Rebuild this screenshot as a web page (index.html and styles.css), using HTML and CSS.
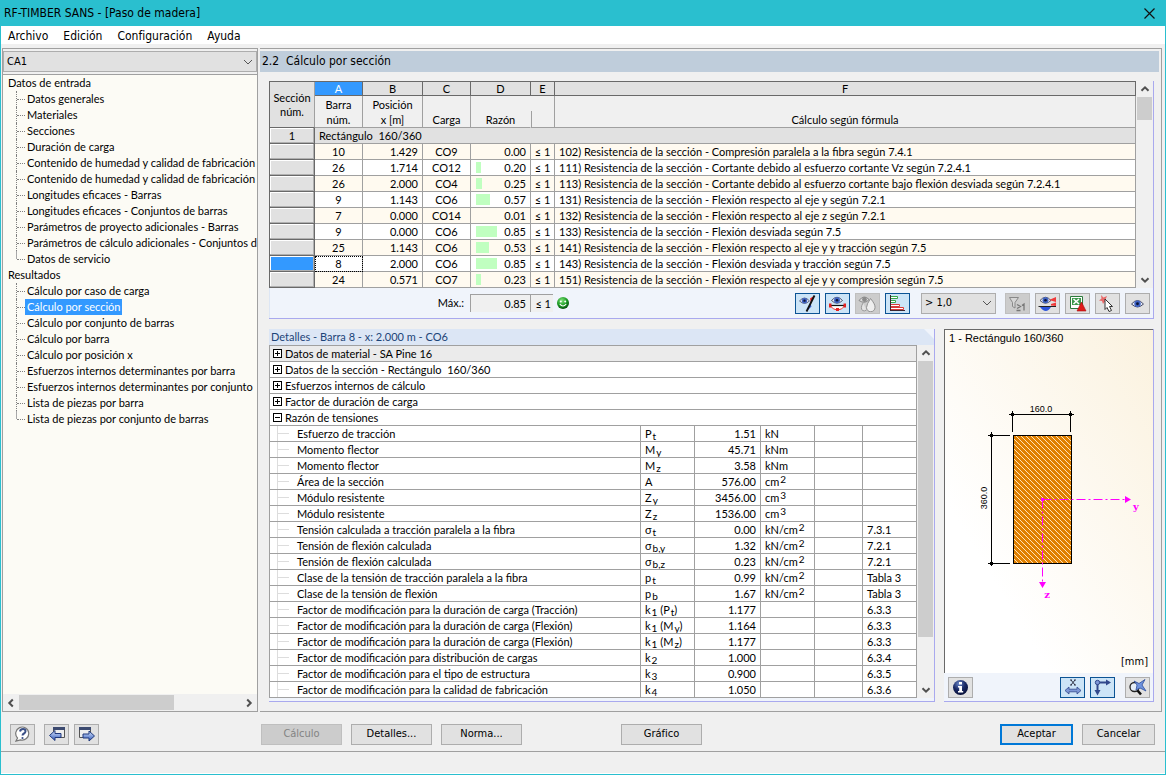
FILE: index.html
```html
<!DOCTYPE html>
<html lang="es">
<head>
<meta charset="utf-8">
<title>RF-TIMBER SANS - [Paso de madera]</title>
<link rel="stylesheet" href="styles.css">
</head>
<body>
<svg class="defs" aria-hidden="true">
  <defs>
    <linearGradient id="arrowBlue" x1="0" y1="0" x2="0" y2="1"><stop offset="0" stop-color="#dbe8ff"/><stop offset="1" stop-color="#2f57b8"/></linearGradient>
    <radialGradient id="greenBall" cx="0.4" cy="0.3" r="0.7"><stop offset="0" stop-color="#7fe37a"/><stop offset="0.6" stop-color="#1d9a24"/><stop offset="1" stop-color="#05520c"/></radialGradient>
    <radialGradient id="navyBall" cx="0.4" cy="0.25" r="0.8"><stop offset="0" stop-color="#6a86c8"/><stop offset="0.5" stop-color="#1a2a66"/><stop offset="1" stop-color="#060d33"/></radialGradient>
    <symbol id="up" viewBox="0 0 16 16"><path d="M4.500 9.800L8 6.300l3.500 3.500" fill="none" stroke="#505050" stroke-width="2"/></symbol>
    <symbol id="down" viewBox="0 0 16 16"><path d="M4.500 6.200L8 9.700l3.500-3.500" fill="none" stroke="#505050" stroke-width="2"/></symbol>
    <symbol id="left" viewBox="0 0 16 16"><path d="M9.800 4.500L6.300 8l3.500 3.500" fill="none" stroke="#505050" stroke-width="2"/></symbol>
    <symbol id="right" viewBox="0 0 16 16"><path d="M6.200 4.500L9.700 8l-3.500 3.500" fill="none" stroke="#505050" stroke-width="2"/></symbol>
    <symbol id="chev" viewBox="0 0 16 16"><path d="M4 6l4 4 4-4" fill="none" stroke="#555" stroke-width="1"/></symbol>
    <symbol id="eye" viewBox="0 0 12 10"><path d="M0.500 5.500Q6-1 11.500 5.500Q6 11 .5 5.500z" fill="#e9edf8" stroke="#2b3252" stroke-width=".8"/><circle cx="6" cy="5.200" r="3" fill="#3f63c4"/><circle cx="6" cy="5.200" r="1.300" fill="#0b1436"/></symbol>
  </defs>
</svg>
<div class="window">
  <header class="titlebar">
    <h1>RF-TIMBER SANS - [Paso de madera]</h1>
    <button class="close" aria-label="Cerrar"><svg width="11" height="11" viewBox="0 0 11 11"><path d="M.5.5l10 10M10.500.5l-10 10" stroke="#111" stroke-width="1.200"/></svg></button>
  </header>
  <nav class="menu">
    <button>Archivo</button><button>Edición</button><button>Configuración</button><button>Ayuda</button>
  </nav>

  <div class="work">
    <aside class="side">
      <div class="combo case">
        <select aria-label="Caso"><option>CA1</option></select>
        <svg width="16" height="16"><use href="#chev"/></svg>
      </div>
      <div class="tree">
        <p>Datos de entrada</p>
        <ul>
          <li><a href="#">Datos generales</a></li>
          <li><a href="#">Materiales</a></li>
          <li><a href="#">Secciones</a></li>
          <li><a href="#">Duración de carga</a></li>
          <li><a href="#">Contenido de humedad y calidad de fabricación</a></li>
          <li><a href="#">Contenido de humedad y calidad de fabricación</a></li>
          <li><a href="#">Longitudes eficaces - Barras</a></li>
          <li><a href="#">Longitudes eficaces - Conjuntos de barras</a></li>
          <li><a href="#">Parámetros de proyecto adicionales - Barras</a></li>
          <li><a href="#">Parámetros de cálculo adicionales - Conjuntos d</a></li>
          <li><a href="#">Datos de servicio</a></li>
        </ul>
        <p>Resultados</p>
        <ul>
          <li><a href="#">Cálculo por caso de carga</a></li>
          <li><a href="#" class="current">Cálculo por sección</a></li>
          <li><a href="#">Cálculo por conjunto de barras</a></li>
          <li><a href="#">Cálculo por barra</a></li>
          <li><a href="#">Cálculo por posición x</a></li>
          <li><a href="#">Esfuerzos internos determinantes por barra</a></li>
          <li><a href="#">Esfuerzos internos determinantes por conjunto</a></li>
          <li><a href="#">Lista de piezas por barra</a></li>
          <li><a href="#">Lista de piezas por conjunto de barras</a></li>
        </ul>
      </div>
      <div class="hscroll">
        <button aria-label="Izquierda"><svg width="16" height="16"><use href="#left"/></svg></button>
        <div class="track"><div class="thumb"></div></div>
        <button aria-label="Derecha"><svg width="16" height="16"><use href="#right"/></svg></button>
      </div>
    </aside>

    <main class="main">
      <h2>2.2&nbsp; Cálculo por sección</h2>

      <section class="results">
        <div class="gridrow">
          <table class="grid">
            <colgroup><col class="c0"><col class="c1"><col class="c2"><col class="c3"><col class="c4"><col class="c5"><col></colgroup>
            <thead>
              <tr class="letters"><th rowspan="2" class="corner">Sección<br>núm.</th><th class="on">A</th><th>B</th><th>C</th><th>D</th><th>E</th><th>F</th></tr>
              <tr class="names"><th>Barra<br>núm.</th><th>Posición<br>x [m]</th><th>Carga</th><th class="open">Razón</th><th class="half"></th><th>Cálculo según fórmula</th></tr>
            </thead>
            <tbody>
              <tr class="group"><th>1</th><td colspan="6">Rectángulo&nbsp; 160/360</td></tr>
              <tr><th></th><td>10</td><td>1.429</td><td>CO9</td><td>0.00</td><td>≤ 1</td><td>102) Resistencia de la sección - Compresión paralela a la fibra según 7.4.1</td></tr>
              <tr><th></th><td>26</td><td>1.714</td><td>CO12</td><td><i class="bar" style="width:5px"></i>0.20</td><td>≤ 1</td><td>111) Resistencia de la sección - Cortante debido al esfuerzo cortante Vz según 7.2.4.1</td></tr>
              <tr><th></th><td>26</td><td>2.000</td><td>CO4</td><td><i class="bar" style="width:6px"></i>0.25</td><td>≤ 1</td><td>113) Resistencia de la sección - Cortante debido al esfuerzo cortante bajo flexión desviada según 7.2.4.1</td></tr>
              <tr><th></th><td>9</td><td>1.143</td><td>CO6</td><td><i class="bar" style="width:14px"></i>0.57</td><td>≤ 1</td><td>131) Resistencia de la sección - Flexión respecto al eje y según 7.2.1</td></tr>
              <tr><th></th><td>7</td><td>0.000</td><td>CO14</td><td>0.01</td><td>≤ 1</td><td>132) Resistencia de la sección - Flexión respecto al eje z según 7.2.1</td></tr>
              <tr><th></th><td>9</td><td>0.000</td><td>CO6</td><td><i class="bar" style="width:21px"></i>0.85</td><td>≤ 1</td><td>133) Resistencia de la sección - Flexión desviada según 7.5</td></tr>
              <tr><th></th><td>25</td><td>1.143</td><td>CO6</td><td><i class="bar" style="width:13px"></i>0.53</td><td>≤ 1</td><td>141) Resistencia de la sección - Flexión respecto al eje y y tracción según 7.5</td></tr>
              <tr><th class="on"></th><td class="focus">8</td><td>2.000</td><td>CO6</td><td><i class="bar" style="width:21px"></i>0.85</td><td>≤ 1</td><td>143) Resistencia de la sección - Flexión desviada y tracción según 7.5</td></tr>
              <tr><th></th><td>24</td><td>0.571</td><td>CO7</td><td><i class="bar" style="width:5px"></i>0.23</td><td>≤ 1</td><td>151) Resistencia de la sección - Flexión respecto al eje y y compresión según 7.5</td></tr>
            </tbody>
          </table>
          <div class="vscroll">
            <button aria-label="Arriba"><svg width="16" height="16"><use href="#up"/></svg></button>
            <div class="track"><div class="thumb small"></div></div>
            <button aria-label="Abajo"><svg width="16" height="16"><use href="#down"/></svg></button>
          </div>
        </div>
        <div class="summary">
          <span class="maxlabel">Máx.:</span><output class="maxval">0.85</output><span class="maxlim">≤ 1</span>
          <svg class="smile" width="12" height="12" viewBox="0 0 12 12"><circle cx="6" cy="6" r="6" fill="url(#greenBall)"/><circle cx="3.800" cy="4.500" r="1" fill="#fff"/><circle cx="8.200" cy="4.500" r="1" fill="#fff"/><path d="M2.800 7q3.200 4 6.400 0" fill="none" stroke="#fff" stroke-width="1.200"/></svg>
          <div class="tools">
            <button class="ico pressed" aria-label="Ver color"><svg viewBox="0 0 21 17"><use href="#eye" x="2" y="1" width="11" height="9"/><path d="M13 3.500L17.500.5l-3.500 8z" fill="#f02020"/><path d="M13 8l-3.500 8.500 5-5z" fill="#3a62d8"/><path d="M17.500 0.500L9.500 16.500" stroke="#111" stroke-width="1.800"/></svg></button>
            <button class="ico pressed" aria-label="Ver diagrama"><svg viewBox="0 0 21 17"><path d="M3 10.500q3 4.500 7.500 4.500t7.500-4.500" fill="#fff" stroke="#e33" stroke-width="1"/><path d="M3 10.500h15" stroke="#111" stroke-width="1.200"/><path d="M2 8.500h2.500v4H2zM16.500 8.500H19v4h-2.500zM9 13h3v3H9z" fill="#e52222"/><use href="#eye" x="4" y="0" width="12" height="10"/></svg></button>
            <button class="ico off" disabled aria-label="Ver material"><svg viewBox="0 0 21 17"><path d="M2 5.500Q7-1 12 4.500Q8 9.500 2 5.500z" fill="#ddd" stroke="#888"/><circle cx="7.500" cy="4.500" r="2.400" fill="#8b8b8b"/><path d="M6 8q-3 5-.5 7.500 2 1 4-.5" fill="#e3e3e3" stroke="#999"/><path d="M13.500 3.500q5 6 4.500 9a4 4 0 0 1-8.500 0q0-3 4-9z" fill="#eee" stroke="#909090"/></svg></button>
            <button class="ico pressed" aria-label="Barras de color"><svg viewBox="0 0 21 17"><path d="M3.500 1.500h7v2h-7M3.500 5.500h5v2h-5" fill="#fff" stroke="#38a848"/><path d="M3.500 9.500h9v2h-9M3.500 12.500h13v2h-13" fill="#fff" stroke="#d83a3a"/><path d="M3.500 0v16M3 15.500h15" stroke="#3a2530"/></svg></button>
            <div class="combo limit">
              <select aria-label="Filtro de razón"><option>&gt; 1,0</option></select>
              <svg width="16" height="16"><use href="#chev"/></svg>
            </div>
            <button class="ico off" disabled aria-label="Filtrar mayores que 1"><svg viewBox="0 0 21 17"><path d="M2.500 2.500h9L8 7.500V13l-2.500-1.500V7.500z" fill="#d6d6d6" stroke="#888"/><path d="M10 9.500l3.500 2-3.500 2M9.500 15.500h4M15 10.500l2-1.500v6.500" fill="none" stroke="#777" stroke-width="1.300"/></svg></button>
            <button class="ico" aria-label="Resultados"><svg viewBox="0 0 21 17"><use href="#eye" x="2" y="0" width="13" height="10"/><path d="M12 5l7-3v5zM14 9l5-1.500V11l-5-.5z" fill="#f03a3a"/><path d="M2 11h15l-1.500 1h-12z" fill="#e33"/><path d="M3 12q6 8 11 0z" fill="#2c55dc"/><path d="M1.500 11.500H19" stroke="#222"/></svg></button>
            <button class="ico" aria-label="Exportar a Excel"><svg viewBox="0 0 21 17"><path d="M3.500 1.500h12v12h-12z" fill="#fff" stroke="#2d7a3d"/><path d="M5 3h9v7H5z" fill="#3d9a4c"/><path d="M6.500 4l5.500 5M12 4L6.500 9" stroke="#fff" stroke-width="1.600"/><path d="M14.500 7l4.500 9h-9z" fill="#e01b1b" stroke="#a80f0f" stroke-width=".6"/></svg></button>
            <button class="ico" aria-label="Seleccionar barra"><svg viewBox="0 0 21 17"><path d="M4 0l2.500 2.500L10 1 8.500 4.500 11 7H7.500L6 9 5 6 2 5.500l2.500-2z" fill="#e86a6a"/><path d="M8 4l7.500 7.500h-3l2 4-2.500 1-2-4L8 14.500z" fill="#fff" stroke="#333"/></svg></button>
            <button class="ico" aria-label="Modo de vista"><svg viewBox="0 0 21 17"><use href="#eye" x="4" y="3" width="13" height="11"/></svg></button>
          </div>
        </div>
      </section>

      <div class="lower">
        <section class="details">
          <h3>Detalles - Barra 8 - x: 2.000 m - CO6</h3>
          <div class="detailrow">
            <table class="props">
              <colgroup><col><col class="d1"><col class="d2"><col class="d3"><col class="d4"><col class="d5"></colgroup>
              <tbody>
                <tr class="head shade"><td colspan="6"><button class="box plus" aria-label="Expandir"></button>Datos de material - SA Pine 16</td></tr>
                <tr class="head"><td colspan="6"><button class="box plus" aria-label="Expandir"></button>Datos de la sección - Rectángulo&nbsp; 160/360</td></tr>
                <tr class="head"><td colspan="6"><button class="box plus" aria-label="Expandir"></button>Esfuerzos internos de cálculo</td></tr>
                <tr class="head"><td colspan="6"><button class="box plus" aria-label="Expandir"></button>Factor de duración de carga</td></tr>
                <tr class="head"><td colspan="6"><button class="box" aria-label="Contraer"></button>Razón de tensiones</td></tr>
                <tr><td>Esfuerzo de tracción</td><td>P<sub>t</sub></td><td>1.51</td><td>kN</td><td></td><td></td></tr>
                <tr><td>Momento flector</td><td>M<sub>y</sub></td><td>45.71</td><td>kNm</td><td></td><td></td></tr>
                <tr><td>Momento flector</td><td>M<sub>z</sub></td><td>3.58</td><td>kNm</td><td></td><td></td></tr>
                <tr><td>Área de la sección</td><td>A</td><td>576.00</td><td>cm<sup>2</sup></td><td></td><td></td></tr>
                <tr><td>Módulo resistente</td><td>Z<sub>y</sub></td><td>3456.00</td><td>cm<sup>3</sup></td><td></td><td></td></tr>
                <tr><td>Módulo resistente</td><td>Z<sub>z</sub></td><td>1536.00</td><td>cm<sup>3</sup></td><td></td><td></td></tr>
                <tr><td>Tensión calculada a tracción paralela a la fibra</td><td>σ<sub>t</sub></td><td>0.00</td><td>kN/cm<sup>2</sup></td><td></td><td>7.3.1</td></tr>
                <tr><td>Tensión de flexión calculada</td><td>σ<sub>b,y</sub></td><td>1.32</td><td>kN/cm<sup>2</sup></td><td></td><td>7.2.1</td></tr>
                <tr><td>Tensión de flexión calculada</td><td>σ<sub>b,z</sub></td><td>0.23</td><td>kN/cm<sup>2</sup></td><td></td><td>7.2.1</td></tr>
                <tr><td>Clase de la tensión de tracción paralela a la fibra</td><td>p<sub>t</sub></td><td>0.99</td><td>kN/cm<sup>2</sup></td><td></td><td>Tabla 3</td></tr>
                <tr><td>Clase de la tensión de flexión</td><td>p<sub>b</sub></td><td>1.67</td><td>kN/cm<sup>2</sup></td><td></td><td>Tabla 3</td></tr>
                <tr><td>Factor de modificación para la duración de carga (Tracción)</td><td>k<sub>1</sub> (P<sub>t</sub>)</td><td>1.177</td><td></td><td></td><td>6.3.3</td></tr>
                <tr><td>Factor de modificación para la duración de carga (Flexión)</td><td>k<sub>1</sub> (M<sub>y</sub>)</td><td>1.164</td><td></td><td></td><td>6.3.3</td></tr>
                <tr><td>Factor de modificación para la duración de carga (Flexión)</td><td>k<sub>1</sub> (M<sub>z</sub>)</td><td>1.177</td><td></td><td></td><td>6.3.3</td></tr>
                <tr><td>Factor de modificación para distribución de cargas</td><td>k<sub>2</sub></td><td>1.000</td><td></td><td></td><td>6.3.4</td></tr>
                <tr><td>Factor de modificación para el tipo de estructura</td><td>k<sub>3</sub></td><td>0.900</td><td></td><td></td><td>6.3.5</td></tr>
                <tr><td>Factor de modificación para la calidad de fabricación</td><td>k<sub>4</sub></td><td>1.050</td><td></td><td></td><td>6.3.6</td></tr>
              </tbody>
            </table>
            <div class="vscroll">
              <button aria-label="Arriba"><svg width="16" height="16"><use href="#up"/></svg></button>
              <div class="track"><div class="thumb large"></div></div>
              <button aria-label="Abajo"><svg width="16" height="16"><use href="#down"/></svg></button>
            </div>
          </div>
        </section>

        <section class="preview">
          <div class="stage">
            <span class="caption">1 - Rectángulo 160/360</span>
            <svg class="drawing" width="208" height="340">
              <defs>
                <pattern id="hatch" width="5" height="5" patternUnits="userSpaceOnUse"><rect width="5" height="5" fill="#e08000"/><path d="M-1-1l7 7M-1 4l2 2M4-1l2 2" stroke="#ffe2b8" stroke-width="1"/></pattern>
              </defs>
              <rect x="68.500" y="105.500" width="58" height="128" fill="url(#hatch)" stroke="#000"/>
              <g stroke="#000" fill="#000">
                <path d="M64 84.500h65M67.500 81v21M125.500 81v21M46.500 102v134M43 105.500h22M43 233.500h22" fill="none"/>
                <path d="M67.500 82.500l2 2-2 2-2-2zM125.500 82.500l2 2-2 2-2-2zM46.500 103.500l2 2-2 2-2-2zM46.500 231.500l2 2-2 2-2-2z"/>
              </g>
              <path d="M97.500 169.500H181" stroke="#f0f" stroke-dasharray="9 3 2 3" fill="none"/>
              <path d="M97.500 169.500V254" stroke="#f0f" stroke-dasharray="9 3 2 3" fill="none"/>
              <path d="M96 168h3v3h-3zM180 166l6 3.500-6 3.500zM94 252h7l-3.500 6z" fill="#f0f"/>
              <text x="96" y="82" class="dim">160.0</text>
              <text transform="translate(42 168) rotate(-90)" class="dim">360.0</text>
              <text x="191" y="180" class="axis">y</text>
              <text x="102" y="268" class="axis">z</text>
            </svg>
            <span class="unit">[mm]</span>
          </div>
          <div class="ptools">
            <button class="ico" aria-label="Información"><svg viewBox="0 0 21 17"><circle cx="10.500" cy="8.500" r="7.500" fill="url(#navyBall)"/><path d="M9 3h3v2.500H9zM8 7h4v5h1.200v1.500H8V12h1.200V8.500H8z" fill="#fff"/></svg></button>
            <span class="grow"></span>
            <button class="ico pressed" aria-label="Cotas"><svg viewBox="0 0 21 17"><path d="M9 1l4 5M13 1L9 6M8 1h2M12 1h2M8 6h2M12 6h2" stroke="#223" fill="none" stroke-width=".9"/><path d="M3 11.500l4-3.500v2.200h8V8l4 3.500-4 3.500v-2.200H7V15z" fill="#7d97d6" stroke="#31488c" stroke-width=".8"/></svg></button>
            <button class="ico pressed" aria-label="Ejes"><svg viewBox="0 0 21 17"><path d="M5.500 3.500H15M5.500 3.500V12" stroke="#31488c" stroke-width="2"/><path d="M14 .5l5 3-5 3zM2.500 11h6l-3 5.500z" fill="#31488c"/><circle cx="5.500" cy="3.500" r="2.200" fill="#7d97d6" stroke="#31488c"/></svg></button>
            <button class="ico last" aria-label="Restablecer vista"><svg viewBox="0 0 21 17"><circle cx="7.500" cy="8" r="4.500" fill="#e4edf8" stroke="#222" stroke-width="1.300"/><path d="M10.500 11.500l3.500 4" stroke="#111" stroke-width="2.500"/><path d="M7 2l5 2.500L18 .5l-3 5.500 4 6-6-3-4 2 1-5z" fill="#6f93de" stroke="#2c4c9c" stroke-width=".8"/></svg></button>
          </div>
        </section>
      </div>
    </main>
  </div>

  <footer class="actions">
    <button class="ico" aria-label="Ayuda"><svg viewBox="0 0 21 17"><path d="M4 15l1.500-3a6.500 6.500 0 1 1 3 1.800z" fill="#fff" stroke="#777" stroke-width="1.200"/><path d="M8 5.500q.5-2.500 3-2.500t2.500 2.200q0 1.500-1.500 2.300T10.500 9.500" fill="none" stroke="#3a4f86" stroke-width="2"/><circle cx="10.500" cy="12" r="1.100" fill="#3a4f86"/></svg></button>
    <button class="ico" aria-label="Anterior"><svg viewBox="0 0 21 17"><path d="M7.500 1.500h11v10h-11z" fill="#eee" stroke="#555"/><path d="M7 1h12v3H7z" fill="#3c4a70"/><path d="M3.500 9.500L9 4.500v3h6v4H9v3z" fill="url(#arrowBlue)" stroke="#20397c"/></svg></button>
    <button class="ico next" aria-label="Siguiente"><svg viewBox="0 0 21 17"><path d="M3.500 1.500h11v10h-11z" fill="#eee" stroke="#555"/><path d="M3 1h12v3H3z" fill="#3c4a70"/><path d="M18.500 10L13 5v3H7v4h6v3z" fill="url(#arrowBlue)" stroke="#20397c"/></svg></button>
    <button class="btn calc" disabled>Cálculo</button>
    <button class="btn">Detalles...</button>
    <button class="btn">Norma...</button>
    <button class="btn graph">Gráfico</button>
    <button class="btn primary">Aceptar</button>
    <button class="btn cancel">Cancelar</button>
  </footer>
  <div class="status"></div>
</div>
</body>
</html>
```

FILE: styles.css
```css
* { box-sizing: border-box; }
html, body { height: 100%; }
body { margin: 0; background: #f0f0f0; color: #000; font: 11px/16px Lato, sans-serif; }
button, select { font: inherit; color: inherit; margin: 0; padding: 0; border: 0; border-radius: 0; background: none; }
h1, h2, h3, p, ul { margin: 0; padding: 0; font-weight: normal; }
svg { display: block; }
.defs { position: absolute; width: 0; height: 0; }

.window { height: 100%; display: flex; flex-direction: column; border: 1px solid #2abfcf; border-top: 0; overflow: hidden; }
.titlebar { flex: none; height: 26px; background: #2abfcf; display: flex; align-items: center; justify-content: space-between; padding: 0 10px 0 3px; }
.titlebar h1 { font: 12px/16px "DejaVu Sans Condensed", sans-serif; }
.menu { flex: none; display: flex; gap: 15px; height: 18px; padding-left: 7px; background: #fff; font: 12px/20px "DejaVu Sans Condensed", sans-serif; }

.work { flex: 1; min-height: 0; display: flex; gap: 2px; padding: 4px 3px 0 1px; }
.side { flex: none; width: 256px; display: flex; flex-direction: column; border: 1px solid #a0a0a0; padding-top: 2px; background: #f0f0f0; }
.combo { display: grid; align-items: center; border: 1px solid #adadad; background: #e1e1e1; }
.combo select { grid-area: 1 / 1; appearance: none; width: 100%; height: 100%; padding-left: 3px; font: 11px/16px "DejaVu Sans Condensed", sans-serif; }
.combo svg { grid-area: 1 / 1; justify-self: end; pointer-events: none; }
.case { height: 21px; flex: none; }
.tree { flex: 1; min-height: 0; overflow: hidden; margin-top: 2px; border-top: 1px solid #a0a0a0; background: #fcfbf5; white-space: nowrap; }
.tree p { padding-left: 5px; }
.tree ul { list-style: none; padding-left: 13px; }
.tree li { height: 16px; display: flex; border-left: 1px dotted #808080; }
.tree li::before { content: ""; width: 8px; height: 8px; flex: none; border-bottom: 1px dotted #808080; }
.tree li:last-child { border-image: linear-gradient(#a8a8a8 50%, transparent 50%) 1; }
.tree a { color: inherit; text-decoration: none; padding: 0 2px; }
.tree .current { background: #3399ff; color: #fff; }
.hscroll { flex: none; display: flex; height: 17px; align-items: center; background: #f0f0f0; }
.hscroll .track { flex: 1; height: 100%; }
.hscroll .thumb { width: 70%; height: 15px; margin-top: 1px; background: #cdcdcd; }

.main { flex: 1; min-width: 0; display: flex; flex-direction: column; border: 1px solid #a0a0a0; border-left: 0; padding: 2px 2px 0 0; }
.main h2 { flex: none; height: 21px; padding: 0 2px; background: #bfcddb; font: 12px/21px "DejaVu Sans Condensed", sans-serif; }

.results { flex: none; margin: 9px 5px 0 9px; border-right: 1px solid #a9a9ee; border-bottom: 1px solid #a9a9ee; background: #f0f4fb; }
.gridrow { display: flex; background: #f0f0f0; }
table { border-collapse: separate; border-spacing: 0; table-layout: fixed; font: 11px/15px Lato, sans-serif; }
th, td { font-weight: normal; padding: 0; white-space: nowrap; overflow: hidden; }
.grid { flex: 1; min-width: 0; border-left: 1px solid #696969; border-top: 1px solid #696969; }
.c0 { width: 45px; } .c1 { width: 48px; } .c2 { width: 60px; } .c3 { width: 48px; } .c4 { width: 60px; } .c5 { width: 24px; }
.grid th, .grid td { height: 16px; border-right: 1px solid #a0a0a0; border-bottom: 1px solid #a0a0a0; }
.grid th { background: #e1e1e1; border-color: #696969; }
.grid .letters th { height: 14px; line-height: 12px; }
.grid .letters .corner { line-height: 14px; vertical-align: middle; border-right-color: #a0a0a0; }
.grid .on { background: #3399ff; color: #fff; }
.grid .names th { height: 32px; background: #f0f0f0; border-color: #a0a0a0; line-height: 15px; vertical-align: bottom; }
.grid .names .open { border-right-color: transparent; }
.grid .names .half { background: linear-gradient(#a0a0a0, #a0a0a0) left bottom / 1px 16px no-repeat #f0f0f0; }
.grid tbody th { box-shadow: inset -1px -1px #b0b0b0, inset 1px 1px #fff; }
.grid tbody td { background: #fff; text-align: center; }
.grid tbody tr:nth-child(even) td { background: #fffaf0; }
.grid tbody .group td { background: #e1e1e1; text-align: left; padding-left: 4px; }
.grid td:nth-child(3), .grid td:nth-child(5) { text-align: right; padding-right: 4px; }
.grid td:nth-child(7) { text-align: left; padding-left: 4px; }
.grid .focus { outline: 1px dotted #000; outline-offset: -1px; }
.bar { float: left; height: 11px; margin: 2px 0 0 5px; background: #c0ffc0; }

.vscroll { flex: none; width: 17px; display: flex; flex-direction: column; align-items: center; background: #f0f0f0; }
.vscroll .track { flex: 1; width: 15px; }
.vscroll .thumb { background: #cdcdcd; }
.thumb.small { height: 23px; }
.thumb.large { height: 86%; }

.summary { display: flex; align-items: center; height: 30px; border-left: 1px solid #dde6f4; }
.maxlabel { width: 200px; padding-right: 6px; text-align: right; }
.maxval, .maxlim { height: 18px; border: 1px solid #a0a0a0; border-width: 1px 0 0 1px; background: #f0f0f0; text-align: right; padding-right: 4px; line-height: 17px; }
.maxval { width: 60px; }
.maxlim { width: 23px; padding-right: 2px; }
.smile { margin-left: 4px; }
.tools { flex: 1; display: flex; justify-content: flex-end; align-items: center; gap: 5px; padding-right: 3px; }
.ico { flex: none; width: 25px; height: 21px; padding: 1px; border: 1px solid #adadad; background: #e1e1e1; }
.ico svg { width: 21px; height: 17px; }
.ico.pressed { border-color: #0b5394; background: #cce4f7; }
.ico.off { border-color: #bfbfbf; background: #cccccc; }
.limit { width: 75px; height: 21px; margin: 0 4px 0 6px; }

.lower { flex: 1; min-height: 0; display: flex; gap: 9px; margin: 10px 5px 9px 9px; }
.details { flex: 1; min-width: 0; display: flex; flex-direction: column; border-right: 1px solid #a9a9ee; border-bottom: 1px solid #a9a9ee; background: #f0f4fb; }
.details h3 { flex: none; height: 16px; padding-left: 2px; color: #1c4478; background: #dce6f5; font: 11px/16px Lato, sans-serif; clip-path: polygon(0 0, calc(100% - 10px) 0, 100% 10px, 100% 100%, 0 100%); }
.detailrow { flex: none; display: flex; background: #f0f0f0; }
.props { flex: 1; min-width: 0; border-left: 1px solid #a0a0a0; border-top: 1px solid #a0a0a0; background: #fff; }
.d1 { width: 54px; } .d2 { width: 66px; } .d3 { width: 54px; } .d4 { width: 48px; } .d5 { width: 54px; }
.props td { height: 16px; border-right: 1px solid #a0a0a0; border-bottom: 1px solid #a0a0a0; padding-left: 4px; }
.props td:first-child { padding-left: 27px; background: linear-gradient(#ddd, #ddd) 7px 0 / 1px 100% no-repeat, linear-gradient(#ddd, #ddd) 7px 7px / 12px 1px no-repeat; }
.props td:nth-child(3) { text-align: right; padding-right: 4px; }
.props .head td { padding-left: 3px; background: none; }
.props .shade td { background: #ebebeb; }
.box { float: left; width: 9px; height: 9px; margin: 3px 3px 0 0; border: 1px solid #000; background: linear-gradient(#000, #000) center / 5px 1px no-repeat #fff; }
.plus { background: linear-gradient(#000, #000) center / 5px 1px no-repeat, linear-gradient(#000, #000) center / 1px 5px no-repeat #fff; }
sub, sup { font-size: 10px; line-height: 0; padding-left: 1px; }
sub { vertical-align: -2px; }
sup { vertical-align: 3px; }

.preview { flex: none; width: 210px; display: flex; flex-direction: column; border-right: 1px solid #a9a9ee; border-bottom: 1px solid #a9a9ee; background: #f0f4fb; }
.stage { flex: 1; min-height: 0; display: grid; border-left: 1px solid #696969; border-top: 1px solid #696969; background: linear-gradient(to top right, #fff 25%, #fbf2df); font: 11px/16px "Liberation Sans", Arial, sans-serif; }
.stage > * { grid-area: 1 / 1; }
.caption { padding-left: 4px; }
.drawing { align-self: start; }
.unit { align-self: end; justify-self: end; padding: 0 5px 3px 0; font-family: "DejaVu Sans Condensed", sans-serif; }
.dim { font: 9px "Liberation Sans", Arial, sans-serif; text-anchor: middle; }
.axis { font: bold 10px "DejaVu Serif", serif; text-anchor: middle; fill: #f0f; }
.ptools { flex: none; height: 28px; display: flex; align-items: center; gap: 5px; padding: 0 3px 0 4px; }
.grow { flex: 1; }
.ptools .last { margin-left: 5px; }

.actions { flex: none; height: 39px; display: flex; align-items: center; gap: 9px; padding: 5px 10px 0 9px; font: 11px/16px "DejaVu Sans Condensed", sans-serif; }
.actions .next { margin-left: -4px; }
.btn { width: 81px; height: 21px; border: 1px solid #adadad; background: #e1e1e1; text-align: center; }
.btn:disabled { background: #cccccc; border-color: #bfbfbf; color: #838383; }
.calc { margin-left: 153px; }
.graph { margin-left: 90px; margin-right: auto; }
.primary { width: 73px; border: 2px solid #0078d7; }
.cancel { width: 73px; }
.status { flex: none; height: 23px; border-top: 1px solid #a0a0a0; border-bottom: 1px solid #fff; }
```
